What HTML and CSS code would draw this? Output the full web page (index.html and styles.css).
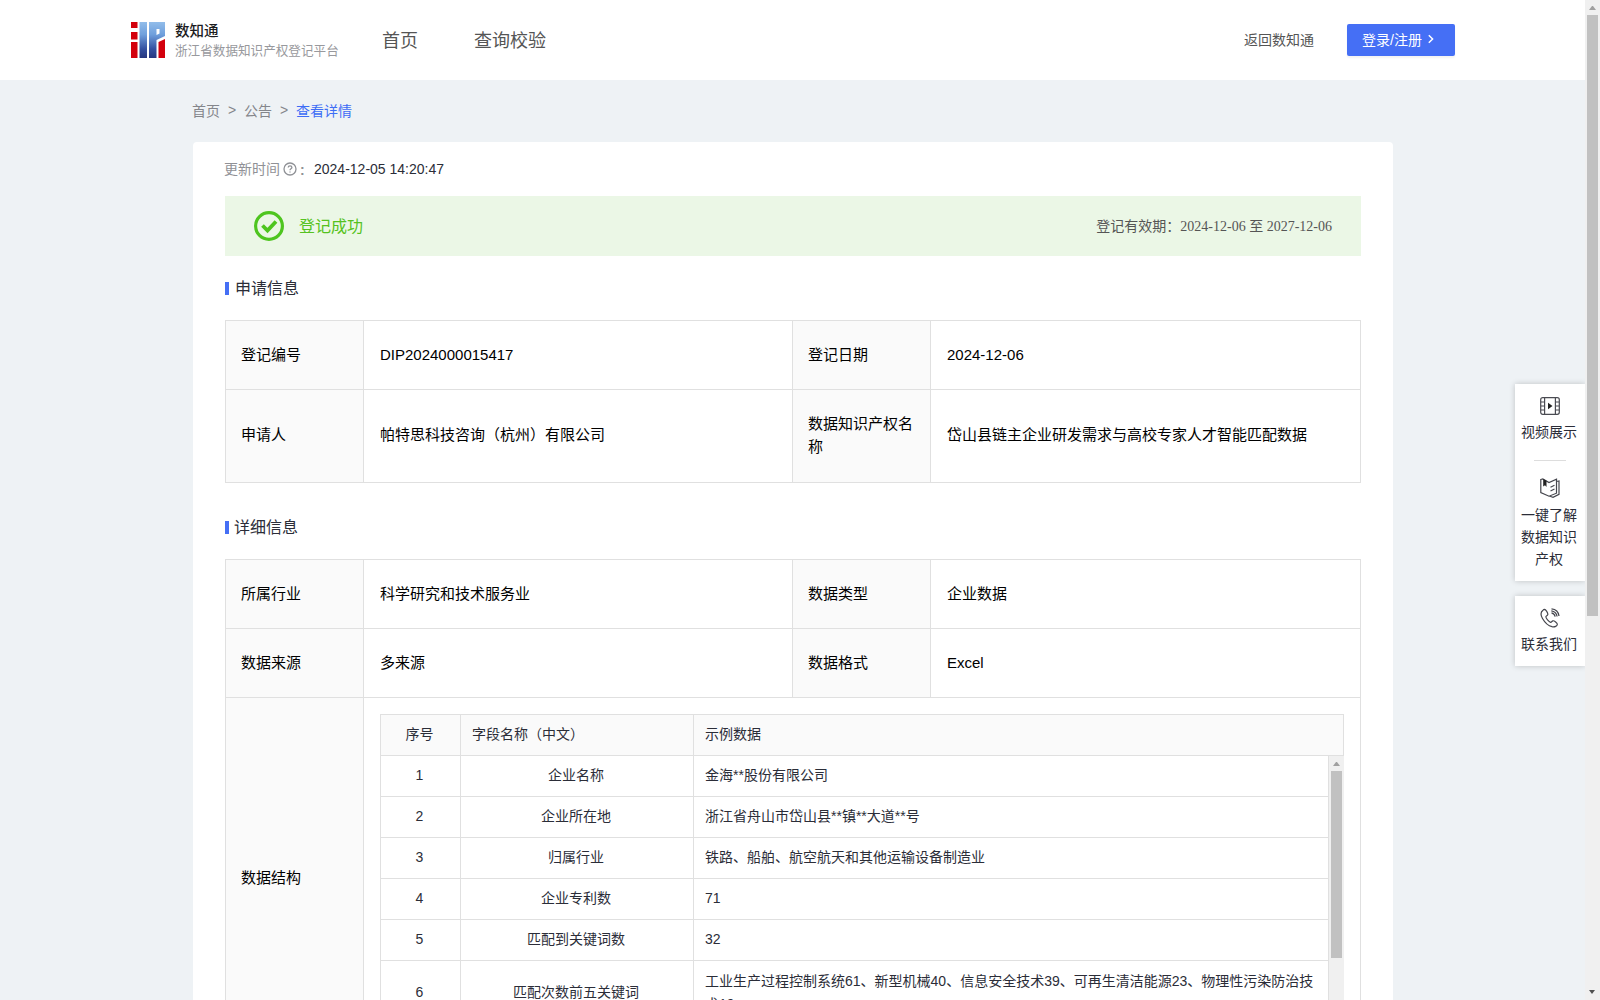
FILE: index.html
```html
<!DOCTYPE html>
<html lang="zh-CN">
<head>
<meta charset="utf-8">
<title>数知通</title>
<link rel="stylesheet" href="styles.css">
</head>
<body>
<div class="viewport">
  <div class="page">
    <header class="header">
      <svg class="logo" width="34" height="36" viewBox="0 0 34 36">
        <defs><linearGradient id="g" x1="0" y1="0" x2="0" y2="36" gradientUnits="userSpaceOnUse"><stop offset="0" stop-color="#92bdea"/><stop offset=".35" stop-color="#6f9fdc"/><stop offset=".75" stop-color="#3450a0"/><stop offset="1" stop-color="#26367f"/></linearGradient></defs>
        <path fill="#d3000d" d="M0 0h6.500v6H0zM0 10h6.500v7.500H0zM0 20h6.500v16H0zM27.500 20l6.500-3v19h-6.500z"/>
        <path fill="url(#g)" d="M8.500 0h7.500v36H8.500zM18 0h16v14l-8.500 4v18H18zM25.500 7v6l3-1.500V7z" fill-rule="evenodd"/>
      </svg>
      <div class="brand"><div class="brand-name">数知通</div><div class="brand-sub">浙江省数据知识产权登记平台</div></div>
      <nav class="nav"><a>首页</a><a>查询校验</a></nav>
      <div class="actions"><a class="back">返回数知通</a><button class="login"><span>登录/注册</span><svg width="8" height="12" viewBox="0 0 8 12"><path d="M1.800 2.200 5.600 6 1.800 9.800" fill="none" stroke="#fff" stroke-width="1.500"/></svg></button></div>
    </header>
    <div class="crumbs"><span>首页</span><span class="sep">&gt;</span><span>公告</span><span class="sep">&gt;</span><span class="current">查看详情</span></div>
    <main class="card">
      <div class="updated"><span>更新时间</span><svg width="14" height="14" viewBox="0 0 14 14" fill="none" stroke="#8f9196" stroke-width="1.300"><circle cx="7" cy="7" r="6"/><path d="M5.200 5.600c0-2.300 3.700-2.300 3.700 0 0 1.200-1.900 1.300-1.900 2.600M7 9.400v1.200"/></svg><span class="colon">:</span><time>2024-12-05 14:20:47</time></div>
      <div class="banner">
        <svg width="30" height="30" viewBox="0 0 30 30" fill="none" stroke="#4ec51f"><circle cx="15" cy="15" r="13.400" stroke-width="3.200"/><path d="m8.500 14.500 5 5L22 10.500" stroke-width="3.800"/></svg>
        <span class="status">登记成功</span>
        <span class="validity">登记有效期：2024-12-06 至 2027-12-06</span>
      </div>
      <h2 class="title">申请信息</h2>
      <div class="grid">
        <div class="row"><div class="label">登记编号</div><div class="value">DIP2024000015417</div><div class="label">登记日期</div><div class="value">2024-12-06</div></div>
        <div class="row tall"><div class="label">申请人</div><div class="value">帕特思科技咨询（杭州）有限公司</div><div class="label">数据知识产权名称</div><div class="value">岱山县链主企业研发需求与高校专家人才智能匹配数据</div></div>
      </div>
      <h2 class="title second">详细信息</h2>
      <div class="grid">
        <div class="row"><div class="label">所属行业</div><div class="value">科学研究和技术服务业</div><div class="label">数据类型</div><div class="value">企业数据</div></div>
        <div class="row"><div class="label">数据来源</div><div class="value">多来源</div><div class="label">数据格式</div><div class="value">Excel</div></div>
        <div class="row structure"><div class="label">数据结构</div>
          <div class="value">
            <div class="fields">
              <div class="field head"><div class="no">序号</div><div class="name">字段名称（中文）</div><div class="sample">示例数据</div></div>
              <div class="scroll">
                <div class="rows">
                  <div class="field"><div class="no">1</div><div class="name">企业名称</div><div class="sample">金海**股份有限公司</div></div>
                  <div class="field"><div class="no">2</div><div class="name">企业所在地</div><div class="sample">浙江省舟山市岱山县**镇**大道**号</div></div>
                  <div class="field"><div class="no">3</div><div class="name">归属行业</div><div class="sample">铁路、船舶、航空航天和其他运输设备制造业</div></div>
                  <div class="field"><div class="no">4</div><div class="name">企业专利数</div><div class="sample">71</div></div>
                  <div class="field"><div class="no">5</div><div class="name">匹配到关键词数</div><div class="sample">32</div></div>
                  <div class="field double"><div class="no">6</div><div class="name">匹配次数前五关键词</div><div class="sample">工业生产过程控制系统61、新型机械40、信息安全技术39、可再生清洁能源23、物理性污染防治技术19</div></div>
                </div>
                <div class="bar"><i class="up"></i><div class="thumb inner"></div></div>
              </div>
            </div>
          </div>
        </div>
      </div>
    </main>
  </div>
  <div class="bar"><i class="up"></i><div class="thumb outer"></div><i class="down"></i></div>
  <aside class="side">
    <div class="panel">
      <div class="tool"><svg width="20" height="18" viewBox="0 0 20 18" fill="none" stroke="#4a4b52" stroke-width="1.200"><rect x=".7" y=".7" width="18.600" height="16.600" rx="2"/><path d="M4.600 1v16M15.400 1v16M1 5h3.600M1 9h3.600M1 13h3.600M15.400 5H19M15.400 9H19M15.400 13H19"/><path d="M8 5.800v6.400L12.500 9z" fill="#222" stroke="none"/></svg><span>视频展示</span></div>
      <hr>
      <div class="tool book"><svg width="20" height="20" viewBox="0 0 20 20" fill="none" stroke="#45464d" stroke-width="1.200"><path d="M.8 1.500 2.800.9 9 4.500l7.500-3.300v14L9 18.200.8 14.500zM16.500 3.500 19 3v13.300l-6 3-3-1"/><path d="M10.500 9.200 14.500 7.200M10.500 13 14.500 11"/><path d="M3.200 1v7.500L5 7.200 6.500 9V2.700z" fill="#222" stroke="none"/></svg><span>一键了解数据知识产权</span></div>
    </div>
    <div class="panel contact">
      <div class="tool"><svg width="20" height="20" viewBox="0 0 20 20" fill="none" stroke="#45464d" stroke-width="1.200"><path d="M3 2.200C.5 4 .5 7 2.500 10.500c2.300 4 6 7.400 9.500 8.200 3 .6 5-.7 5.300-2.300.2-1.400-3.200-3.900-4.400-3.600-1.100.3-1.300 1.600-2.300 1.500-1.700-.2-4.900-4.100-4.700-5.600.1-.9 1.600-1 1.900-2C8.200 5.300 5.600 1.200 4.500 1.300 4 1.400 3.400 1.800 3 2.200z"/><path d="M11.500 4.800c2.200.5 3.300 1.700 3.700 3.800M11.300 2.800c3.200.4 5.300 2.500 5.800 5.700M11.500.8c4 .3 7 3.200 7.500 7.200"/></svg><span>联系我们</span></div>
    </div>
  </aside>
</div>
</body>
</html>
```
FILE: styles.css
```css
* { box-sizing: border-box; }
body { margin: 0; overflow: hidden; font-family: "Liberation Sans", "Noto Sans CJK SC", sans-serif; font-size: 14px; color: #2b2d38; }
.viewport { position: relative; display: flex; width: 1600px; height: 1000px; overflow: hidden; }
.page { width: 1585px; height: 1000px; overflow: hidden; background: #eef2f5; }
.header { display: flex; align-items: center; height: 80px; padding: 0 130px 0 131px; background: #fff; }
.logo { flex: none; }
.brand { margin-left: 10px; padding-bottom: 2px; width: 165px; white-space: nowrap; }
.brand-name { font: 500 14.5px/20px "Noto Sans CJK SC", sans-serif; color: #1c1c1e; }
.brand-sub { font: 12.6px/19px "Noto Sans CJK SC", sans-serif; color: #98999d; }
.nav { display: flex; gap: 56px; margin-left: 42px; padding-bottom: 3px; font-size: 18px; color: #555; }
.actions { display: flex; align-items: center; gap: 33px; margin-left: auto; color: #555; }
.back { padding-bottom: 3px; }
.login { display: flex; align-items: center; gap: 5px; width: 108px; height: 32px; padding: 0 0 2px 15px; border: 0; border-radius: 2px; background: #456ff5; box-shadow: 0 2px 2px rgba(0,0,0,.05); color: #fff; font: inherit; }
.login span { padding-bottom: 1px; }
.crumbs { display: flex; align-items: center; height: 62px; padding: 0 0 3px 192px; color: #84868b; }
.sep { width: 24px; text-align: center; }
.current { color: #3d6df5; }
.card { width: 1200px; height: 1200px; margin-left: 193px; padding: 0 32px; border-radius: 4px; background: #fff; }
.updated { display: flex; align-items: center; height: 54px; color: #909196; }
.updated span { padding-bottom: 2px; }
.updated > span:first-child { margin-left: -1px; }
.updated svg { margin-left: 3px; }
.updated .colon { width: 17px; padding: 2px 0 0 3px; font-weight: 700; }
.updated time { font-size: 14px; color: #2b2d38; }
.banner { display: flex; align-items: center; height: 60px; padding: 0 29px; background: #ebf7e6; }
.status { margin-left: 15px; padding-bottom: 3px; font-size: 16px; color: #55c220; }
.validity { margin-left: auto; padding-bottom: 3px; font-family: "Liberation Serif", "Noto Sans CJK SC", serif; color: #555; }
.title { display: flex; align-items: center; gap: 6px; height: 64px; margin: 0; padding-bottom: 3px; font-size: 16px; font-weight: 400; color: #2b2d38; }
.title::before { content: ""; width: 4px; height: 13px; margin-top: 4px; background: #456ff5; }
.title.second { height: 76px; padding: 11px 0 2px; gap: 5px; }
.grid { border: solid #e0e0e0; border-width: 1px 0 0 1px; font-size: 15px; line-height: 23px; color: #000; }
.row { display: grid; grid-template-columns: 138px 429px 138px 430px; height: 69px; }
.row.tall { height: 93px; }
.row.structure { grid-template-columns: 138px 997px; height: 362px; }
.row > div { display: flex; align-items: center; padding: 0 15px 2px; border: solid #e0e0e0; border-width: 0 1px 1px 0; }
.row > .value { padding-bottom: 1px; padding-left: 16px; }
.row > .label { background: #fafafa; }
.row.tall > div { padding-bottom: 3px; }
.row.structure > .value { align-items: flex-start; padding: 16px; }
.fields { width: 964px; height: 329px; overflow: hidden; border-top: 1px solid #e0e0e0; font-size: 14px; color: #2b2d38; }
.field { display: grid; grid-template-columns: 81px 233px 1fr; height: 41px; }
.field.double { height: 65px; }
.field > div { display: flex; align-items: center; justify-content: center; padding: 0 2px 1px 0; border: solid #e0e0e0; border-width: 0 1px 1px 0; }
.field > .no { border-left-width: 1px; }
.field > .sample { justify-content: flex-start; padding-left: 11px; padding-right: 12px; }
.head { background: #fafafa; }
.field.head > .name { justify-content: flex-start; padding-left: 11px; }
.scroll { display: flex; }
.rows { width: 949px; flex: none; }
.bar { position: relative; flex: none; width: 15px; background: #f0f0f0; }
.up { display: block; margin: 6px 4px 0; border: solid transparent; border-width: 0 3.5px 4px; border-bottom-color: #a0a0a0; }
.down { position: absolute; left: 4px; bottom: 6px; border: solid transparent; border-width: 4px 3.5px 0; border-top-color: #505050; }
.thumb { width: 11px; margin: 5px 2px 0; background: #c1c1c1; }
.thumb.inner { height: 187px; }
.thumb.outer { height: 601px; }
.side { position: absolute; right: 15px; top: 384px; width: 70px; display: grid; gap: 15px; }
.panel { height: 197px; padding-top: 13px; background: #fff; box-shadow: 0 0 6px rgba(0,0,0,.2); clip-path: inset(-8px 0 -8px -8px); }
.panel.contact { height: 70px; padding-top: 12px; }
.tool { display: flex; flex-direction: column; align-items: center; line-height: 22px; text-align: center; }
.tool svg { margin-bottom: 6px; }
.tool span { width: 56px; margin-right: 2px; }
.contact svg { margin-bottom: 5px; }
.panel hr { width: 32px; height: 1px; margin: 17px auto; border: 0; background: #ddd; }
```
